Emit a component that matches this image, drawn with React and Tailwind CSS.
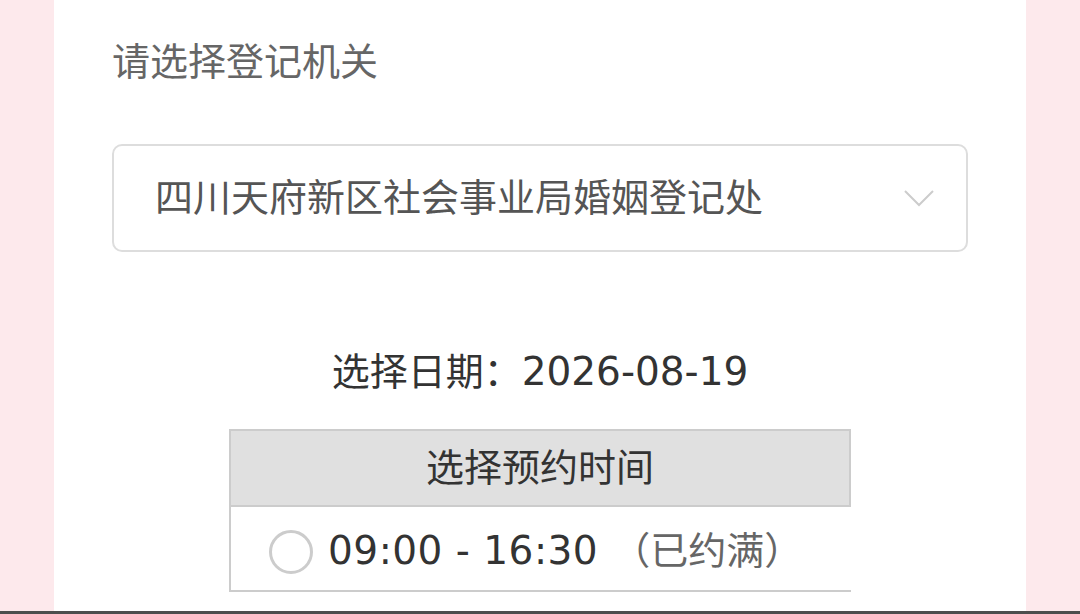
import React from "react";

const font = { fontFamily: '"DejaVu Sans", "Noto Sans CJK SC", sans-serif' };

const Chevron = () => (
  <svg width="30" height="18" viewBox="0 0 30 18" fill="none">
    <path d="M1 2 L15 16 L29 2" stroke="#cccccc" strokeWidth="2" />
  </svg>
);

const App = () => {
  return (
    <div
      className="w-[1080px] h-[614px] bg-[#fde9ec] flex flex-col overflow-hidden"
      style={font}
    >
      <div className="flex-1 flex">
        <div className="mx-[54px] flex-1 bg-white px-[58px] pt-[37px] flex flex-col">
          {/* title */}
          <div className="text-[38px] leading-[50px] text-[#666666]">请选择登记机关</div>

          {/* office select */}
          <div className="mt-[57px] h-[108px] border-2 border-[#dddddd] rounded-[10px] flex items-center justify-between pl-[41px] pr-[32px]">
            <span className="text-[38px] leading-[50px] text-[#555555]">
              四川天府新区社会事业局婚姻登记处
            </span>
            <Chevron />
          </div>

          {/* date */}
          <div className="mt-[95px] text-center text-[38px] leading-[50px] text-[#333333]">
            选择日期：<span className="text-[39px]">2026-08-19</span>
          </div>

          {/* time table */}
          <div className="mt-[32px] mx-auto w-[622px]">
            <div className="h-[78px] bg-[#e0e0e0] border-2 border-[#cccccc] flex items-center justify-center text-[38px] text-[#333333]">
              选择预约时间
            </div>
            <div className="h-[85px] border-l-2 border-b-2 border-[#cccccc] flex items-center pl-[38px] pt-[6px]">
              <span className="w-[44px] h-[44px] rounded-full border-[3px] border-[#cccccc] mr-[15px]"></span>
              <span className="text-[39px] text-[#333333] tracking-[0.5px]">09:00 - 16:30</span>
              <span className="text-[38px] text-[#666666] ml-[14px]">（已约满）</span>
            </div>
          </div>
        </div>
      </div>
      <div className="h-[3px] bg-[#4d4d4d]"></div>
    </div>
  );
};

export default App;
